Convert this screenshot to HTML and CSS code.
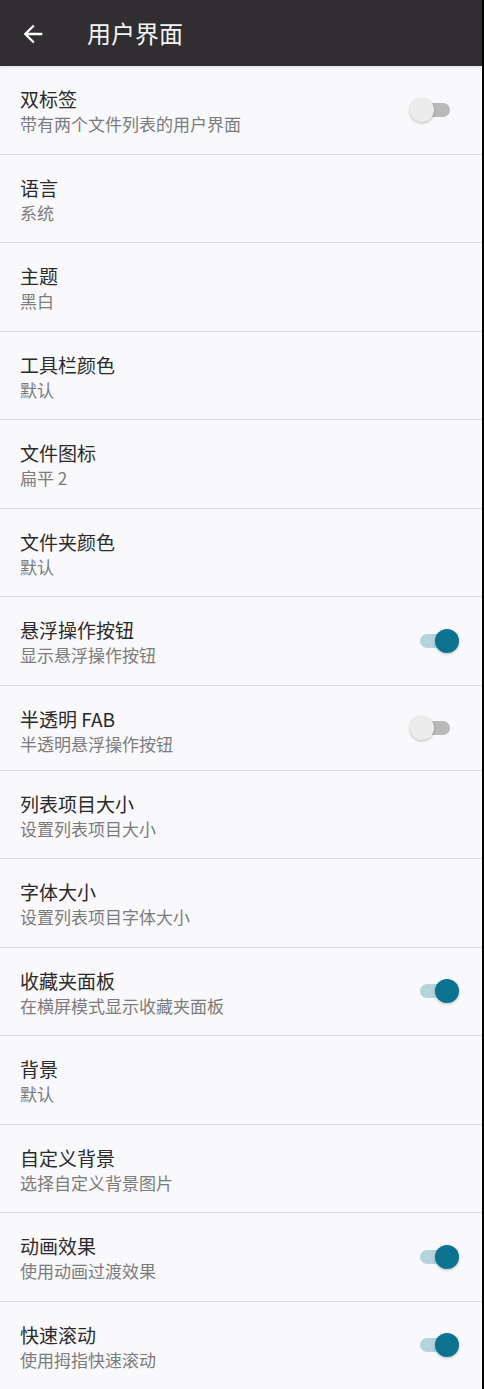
FILE: index.html
```html
<!DOCTYPE html>
<html>
<head>
    <meta charset="utf-8">
    <title>用户界面</title>
    <link rel="stylesheet" href="styles.css">
</head>
<body>
    <div class="screen">
        <header class="toolbar">
            <svg class="back-icon" viewBox="0 0 24 24" width="28" height="28">
                <path d="M20 11H7.83l5.59-5.59L12 4l-8 8 8 8 1.41-1.41L7.83 13H20v-2z" fill="#ffffff"/>
            </svg>
            <h1 class="toolbar-title">用户界面</h1>
        </header>

        <ul class="pref-list">
            <li class="pref">
                <div class="pref-text">
                    <div class="pref-title">双标签</div>
                    <div class="pref-summary">带有两个文件列表的用户界面</div>
                </div>
                <span class="switch"><span class="track"></span><span class="thumb"></span></span>
            </li>
            <li class="pref">
                <div class="pref-text">
                    <div class="pref-title">语言</div>
                    <div class="pref-summary">系统</div>
                </div>
            </li>
            <li class="pref">
                <div class="pref-text">
                    <div class="pref-title">主题</div>
                    <div class="pref-summary">黑白</div>
                </div>
            </li>
            <li class="pref">
                <div class="pref-text">
                    <div class="pref-title">工具栏颜色</div>
                    <div class="pref-summary">默认</div>
                </div>
            </li>
            <li class="pref">
                <div class="pref-text">
                    <div class="pref-title">文件图标</div>
                    <div class="pref-summary">扁平 2</div>
                </div>
            </li>
            <li class="pref">
                <div class="pref-text">
                    <div class="pref-title">文件夹颜色</div>
                    <div class="pref-summary">默认</div>
                </div>
            </li>
            <li class="pref">
                <div class="pref-text">
                    <div class="pref-title">悬浮操作按钮</div>
                    <div class="pref-summary">显示悬浮操作按钮</div>
                </div>
                <span class="switch on"><span class="track"></span><span class="thumb"></span></span>
            </li>
            <li class="pref short">
                <div class="pref-text">
                    <div class="pref-title">半透明 FAB</div>
                    <div class="pref-summary">半透明悬浮操作按钮</div>
                </div>
                <span class="switch"><span class="track"></span><span class="thumb"></span></span>
            </li>
            <li class="pref">
                <div class="pref-text">
                    <div class="pref-title">列表项目大小</div>
                    <div class="pref-summary">设置列表项目大小</div>
                </div>
            </li>
            <li class="pref">
                <div class="pref-text">
                    <div class="pref-title">字体大小</div>
                    <div class="pref-summary">设置列表项目字体大小</div>
                </div>
            </li>
            <li class="pref">
                <div class="pref-text">
                    <div class="pref-title">收藏夹面板</div>
                    <div class="pref-summary">在横屏模式显示收藏夹面板</div>
                </div>
                <span class="switch on"><span class="track"></span><span class="thumb"></span></span>
            </li>
            <li class="pref">
                <div class="pref-text">
                    <div class="pref-title">背景</div>
                    <div class="pref-summary">默认</div>
                </div>
            </li>
            <li class="pref">
                <div class="pref-text">
                    <div class="pref-title">自定义背景</div>
                    <div class="pref-summary">选择自定义背景图片</div>
                </div>
            </li>
            <li class="pref">
                <div class="pref-text">
                    <div class="pref-title">动画效果</div>
                    <div class="pref-summary">使用动画过渡效果</div>
                </div>
                <span class="switch on"><span class="track"></span><span class="thumb"></span></span>
            </li>
            <li class="pref">
                <div class="pref-text">
                    <div class="pref-title">快速滚动</div>
                    <div class="pref-summary">使用拇指快速滚动</div>
                </div>
                <span class="switch on"><span class="track"></span><span class="thumb"></span></span>
            </li>
        </ul>
    </div>
</body>
</html>
```

FILE: styles.css
```css
body {
    margin: 0;
    padding: 0;
    background-color: #000000;
    font-family: "Noto Sans CJK SC", "Noto Sans", sans-serif;
}

.screen {
    width: 482px;
    min-height: 1389px;
    background-color: #f9f8fb;
    overflow: hidden;
}

.toolbar {
    height: 66px;
    background-color: #302e30;
    display: flex;
    align-items: center;
    box-shadow: 0 1px 3px rgba(0, 0, 0, 0.12);
}

.back-icon {
    margin-left: 19px;
    margin-top: 1px;
    flex-shrink: 0;
}

.toolbar-title {
    margin: 0 0 0 40px;
    font-size: 24px;
    font-weight: normal;
    color: #f4f4f4;
    line-height: 30px;
}

.pref-list {
    list-style-type: none;
    margin: 0;
    padding: 0;
}

.pref {
    height: 87.5px;
    box-sizing: content-box;
    border-bottom: 1px solid #dddcde;
    display: flex;
    align-items: center;
    padding: 0 23px 0 20px;
}

.pref.short {
    height: 84px;
}

.pref-text {
    flex: 1;
    align-self: flex-start;
    padding-top: 20px;
}

.pref-title {
    font-size: 19px;
    line-height: 25px;
    color: #2a2a2a;
}

.pref-summary {
    font-size: 17px;
    line-height: 25px;
    color: #7c7c7c;
}

/* switch: off by default, .on moves the thumb right */
.switch {
    position: relative;
    width: 49px;
    height: 24px;
    flex-shrink: 0;
}

.track {
    position: absolute;
    left: 9.5px;
    top: 5px;
    width: 30px;
    height: 14px;
    border-radius: 7px;
    background-color: #b9b9b9;
}

.thumb {
    position: absolute;
    left: 0;
    top: 0;
    width: 24px;
    height: 24px;
    border-radius: 50%;
    background-color: #ececec;
    box-shadow: 0 1px 3px rgba(0, 0, 0, 0.25);
}

.switch.on .track {
    background-color: #b5d3db;
}

.switch.on .thumb {
    left: 25px;
    background-color: #0b7390;
}
```
